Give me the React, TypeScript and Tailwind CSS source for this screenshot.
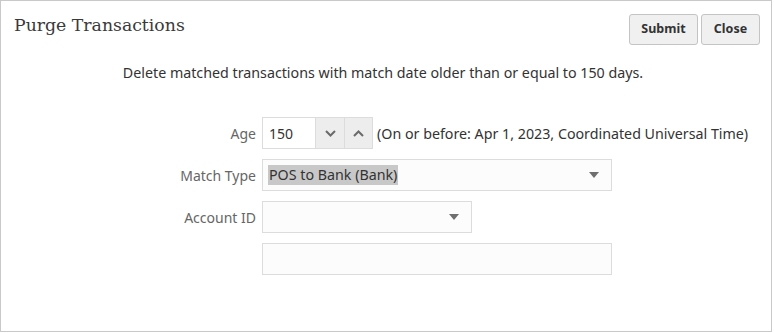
import React from "react";

function Caret() {
  return (
    <svg width="10" height="6" viewBox="0 0 10 6" className="block">
      <path d="M0 0 L10 0 L5 6 Z" fill="#6f6f6f" />
    </svg>
  );
}

function Chevron({ up }: { up?: boolean }) {
  return (
    <svg width="11" height="7" viewBox="0 0 11 7" className="block">
      <path
        d={up ? "M1 6 L5.5 1.5 L10 6" : "M1 1 L5.5 5.5 L10 1"}
        fill="none"
        stroke="#6b6b6b"
        strokeWidth="2"
      />
    </svg>
  );
}

export default function App() {
  const font = { fontFamily: '"Noto Sans", "Open Sans", sans-serif' };
  return (
    <div className="w-[772px] h-[332px] border border-[#c9c9c9] bg-white" style={font}>
      <div className="flex items-start justify-between pl-[13px] pr-[11px] pt-[12px]">
        <div
          className="text-[17.3px] leading-[24px] text-[#3a3a3a]"
          style={{ fontFamily: '"DejaVu Serif", "Liberation Serif", serif' }}
        >
          Purge Transactions
        </div>
        <div className="flex gap-[3px] pt-[1px]">
          <button className="w-[69px] h-[31px] rounded-[3px] border border-[#c4c4c4] bg-[#f0f0f1] text-[12.5px] font-bold text-[#333]">
            Submit
          </button>
          <button className="w-[59px] h-[31px] rounded-[3px] border border-[#c4c4c4] bg-[#f0f0f1] text-[12.5px] font-bold text-[#333]">
            Close
          </button>
        </div>
      </div>
      <div className="text-center text-[14.25px] text-[#333] mt-[17px] pr-[6px]">
        Delete matched transactions with match date older than or equal to 150 days.
      </div>
      <div className="mt-[34px] flex flex-col gap-[10px]">
        <div className="flex items-center">
          <div className="w-[255px] text-right text-[14px] text-[#666]">Age</div>
          <div className="ml-[6px] flex h-[32px] border border-[#dcdcdc]">
            <div className="w-[52px] pl-[6px] flex items-center text-[14px] text-[#333] bg-white">150</div>
            <div className="w-[29px] flex items-center justify-center bg-[#ededed] border-l border-[#dcdcdc]">
              <Chevron />
            </div>
            <div className="w-[28px] flex items-center justify-center bg-[#ededed] border-l border-[#dcdcdc]">
              <Chevron up />
            </div>
          </div>
          <div className="ml-[4px] text-[14.25px] text-[#333]">
            (On or before: Apr 1, 2023, Coordinated Universal Time)
          </div>
        </div>
        <div className="flex items-center">
          <div className="w-[255px] text-right text-[14px] text-[#666]">Match Type</div>
          <div className="ml-[6px] w-[350px] h-[32px] border border-[#dcdcdc] bg-[#fcfcfc] flex items-center justify-between pl-[5px] pr-[12px]">
            <span className="bg-[#c8c8c8] text-[14.25px] text-[#333] leading-[20px] px-[1px]">POS to Bank (Bank)</span>
            <Caret />
          </div>
        </div>
        <div className="flex items-center">
          <div className="w-[255px] text-right text-[14px] text-[#666]">Account ID</div>
          <div className="ml-[6px] w-[210px] h-[32px] border border-[#dcdcdc] bg-[#fcfcfc] flex items-center justify-end pr-[12px]">
            <Caret />
          </div>
        </div>
        <div className="flex items-center">
          <div className="w-[255px]" />
          <div className="ml-[6px] w-[350px] h-[32px] border border-[#dcdcdc] bg-[#fcfcfc]" />
        </div>
      </div>
    </div>
  );
}
